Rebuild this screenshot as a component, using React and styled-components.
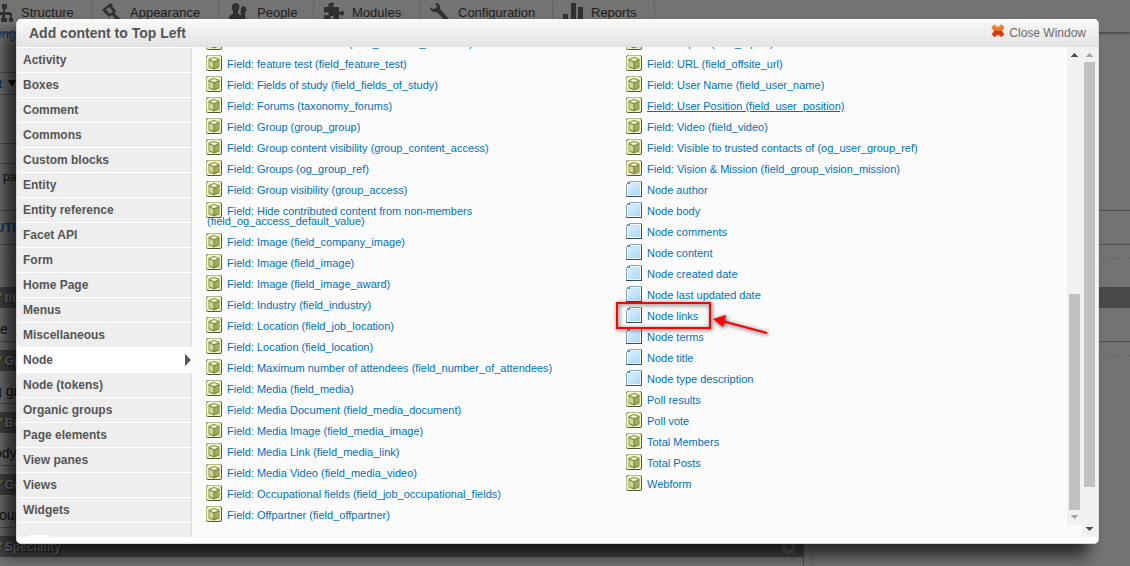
import React from "react";
import styled, { createGlobalStyle, css } from "styled-components";

const GlobalStyle = createGlobalStyle`
  body {
    margin: 0;
    overflow: hidden;
    background: #737373;
    font-family: "Liberation Sans", Arial, sans-serif;
  }
`;

// Page behind the modal
const Page = styled.div`
  position: relative;
  display: flex;
  flex-direction: column;
  height: 566px;
  overflow: hidden;
  background: #737373;
`;

const Toolbar = styled.nav`
  display: flex;
  flex: none;
  height: 32px;
  margin-left: -17px;
  box-shadow: 0 1px 3px #333;
  background: #737373;
`;

const ToolbarItem = styled.div`
  box-sizing: border-box;
  display: flex;
  gap: 8px;
  width: ${(props) => props.$width}px;
  padding: 2px 0 0 10px;
  border-right: 1px solid #626262;
  color: #1e1e1e;
  font-size: 13px;
  line-height: 22px;

  svg {
    flex: none;
    fill: #303030;
  }
`;

const Columns = styled.div`
  display: grid;
  grid-template-columns: 804px 1fr;
  flex: 1;
`;

const Main = styled.div`
  border-right: 1px solid #4c4c4c;
`;

const Aside = styled.div`
  margin-left: 7px;
  border-left: 1px dashed #656565;
`;

const Strip = styled.div`
  box-sizing: border-box;
  height: ${(props) => props.$height}px;
  border-bottom: 1px ${(props) => (props.$dashed ? "dashed" : "solid")}
    ${(props) => (props.$plain ? "transparent" : props.$dashed ? "#636363" : "#505050")};
  color: ${(props) => (props.$blue ? "#0c3f72" : "#111")};
  font-size: ${(props) => props.$size || 14}px;
  font-weight: ${(props) => (props.$bold ? "bold" : "normal")};
  line-height: ${(props) => props.$line || props.$height}px;
  text-indent: ${(props) => props.$indent || 0}px;
  white-space: pre;
`;

const Caret = styled.span`
  display: inline-block;
  margin-left: 6px;
  border: 4px solid transparent;
  border-top: 7px solid #111;
  border-bottom: 0;
  vertical-align: 1px;
`;

const PaneBar = styled.div`
  display: flex;
  justify-content: space-between;
  align-items: center;
  height: 21px;
  padding-right: 6px;
  background: #454545;
  color: #808080;
  font-size: 12px;
  font-weight: bold;
  text-shadow: 1px 1px 1px #222;

  i {
    margin-right: 3px;
    margin-left: -1px;
    color: #a87a2c;
  }
`;

const Band = styled.div`
  height: 21px;
  background: #484848;
`;

// Modal
const Modal = styled.section`
  position: absolute;
  top: 19px;
  left: 16px;
  box-sizing: border-box;
  display: flex;
  flex-direction: column;
  width: 1083px;
  height: 525px;
  overflow: hidden;
  border: 1px solid #d8d8d8;
  border-top-color: #fff;
  border-radius: 5px;
  background: #fff;
  box-shadow: -11px 12px 15px rgba(0, 0, 0, 0.65);
`;

const ModalHeader = styled.header`
  box-sizing: border-box;
  display: flex;
  justify-content: space-between;
  align-items: center;
  flex: none;
  height: 27px;
  padding: 0 12px 1px;
  background: linear-gradient(#f9f9f9, #e3e3e3);
`;

const Title = styled.h2`
  margin: 0;
  color: #555;
  font-size: 14px;
  font-weight: bold;
`;

const CloseLink = styled.a`
  display: flex;
  align-items: center;
  gap: 4px;
  color: #6b6b6b;
  font-size: 12px;

  svg {
    margin-bottom: 4px;
  }
`;

const ModalBody = styled.div`
  display: flex;
  height: 490px;
  padding-right: 1px;
  background: #fbfbfb;
`;

const Sidebar = styled.ul`
  box-sizing: border-box;
  flex: none;
  width: 175px;
  height: 490px;
  margin: 0;
  padding: 0;
  overflow: hidden;
  border-top: 1px solid #fff;
  background: #fff;
  list-style: none;
`;

const Category = styled.li`
  box-sizing: border-box;
  display: flex;
  justify-content: space-between;
  align-items: center;
  height: 25px;
  padding-left: 6px;
  border-bottom: 1px solid #fff;
  background: #eee;
  box-shadow: inset -1px 0 #dcdcdc;
  color: #555;
  font-size: 12px;
  font-weight: bold;

  ${(props) =>
    props.$active &&
    css`
      background: #fff;
      box-shadow: none;
    `}
`;

const CategoryEnd = styled.li`
  display: flex;
  align-items: flex-end;
  height: 14px;
  padding-left: 12px;
  background: #eee;
  box-shadow: inset -1px 0 #dcdcdc;

  span {
    width: 20px;
    height: 2px;
    background: #fff;
  }
`;

const Content = styled.div`
  display: flex;
  flex: 1;
  height: 490px;
  padding-left: 12px;
  overflow: hidden;
`;

const ContentColumn = styled.div`
  flex: none;
  width: 420px;
  margin-top: -14px;
`;

const ContentItem = styled.div`
  max-width: ${(props) => (props.$narrow ? "300px" : "none")};
  padding: 5px 0 6px 3px;
  color: #0071b8;
  font-size: 11px;
  line-height: 10px;

  svg {
    width: 20px;
    height: 20px;
    margin: -13px 0 -5px -3px;
    vertical-align: baseline;
  }

  a {
    margin-left: 3px;
    text-decoration: ${(props) => (props.$underlined ? "underline" : "none")};
    text-underline-offset: 1px;
  }
`;

const Scrollbar = styled.div`
  display: flex;
  flex-direction: column;
  align-items: center;
  flex: none;
  width: 15px;
  height: ${(props) => props.$height}px;
  background: #f1f1f1;
`;

const Thumb = styled.div`
  width: 11px;
  height: ${(props) => props.$height}px;
  margin: ${(props) => props.$top}px 0 auto;
  background: #c1c1c1;
`;

const ScrollArrow = styled.svg`
  flex: none;
  width: 15px;
  height: 15px;
  fill: ${(props) => (props.$enabled ? "#505050" : "#a3a3a3")};
`;

const Annotation = styled.svg`
  position: absolute;
  top: 295px;
  left: 608px;
  width: 170px;
  height: 50px;
  filter: drop-shadow(1px 1px 2px rgba(0, 0, 0, 0.75));
`;

const tools = [
  {
    label: "Structure",
    width: 109,
    icon: <path d="M9 2h5v5h-2v3h4q3 0 3 3v3h2v4h-5v-4h1v-2q0-1-1-1h-4v3h2v4H8v-4h1v-3H6q-1 0-1 1v2h1v4H1v-4h2v-3q0-3 3-3h4V7H9z" />,
  },
  {
    label: "Appearance",
    width: 127,
    icon: <path fillRule="evenodd" d="M0 8 8.500 1l2 1.500-.5 1.500 4 5-1.500 2L18 17l-2 2-6-6-3 2zm4-.5L8 12l3-2.500L7 5z" />,
  },
  {
    label: "People",
    width: 95,
    icon: (
      <path d="M7 1c3 0 4 3 3 6L9 9v3c3 1 4 2 3 5H0c0-3 1-4 4-5V9C1 4 4 1 7 1zm7 3c4 0 4 5 2 7v3l1 4h-4l-1-4v-3l-1-1c2-2 0-5 3-6z" />
    ),
  },
  {
    label: "Modules",
    width: 106,
    icon: (
      <path d="M0 5h5C2 1 10-1 10 2c0 1-1 2-1 3h6v5c2 0 4-2 5 0 1 4-2 4-5 2v6H9c0-2 2-4-1-4s-2 2-1 4H0v-5c2 0 5 1 5-1s-3-2-5-1z" />
    ),
  },
  {
    label: "Configuration",
    width: 133,
    icon: <path d="M5 1c4 0 6 3 5 6l9 10-3 3-9-10c-3 1-7-1-7-5l3 2 3-1 1-2z" />,
  },
  {
    label: "Reports",
    width: 102,
    icon: <path d="M0 12h5v8H0zM8 1h5v19H8zM15 5h5v15h-5z" />,
  },
];

const categories = [
  "Activity",
  "Boxes",
  "Comment",
  "Commons",
  "Custom blocks",
  "Entity",
  "Entity reference",
  "Facet API",
  "Form",
  "Home Page",
  "Menus",
  "Miscellaneous",
  "Node",
  "Node (tokens)",
  "Organic groups",
  "Page elements",
  "View panes",
  "Views",
  "Widgets",
];

const leftItems = [
  "Field: Exercise locations (field_exercise_locations)",
  "Field: feature test (field_feature_test)",
  "Field: Fields of study (field_fields_of_study)",
  "Field: Forums (taxonomy_forums)",
  "Field: Group (group_group)",
  "Field: Group content visibility (group_content_access)",
  "Field: Groups (og_group_ref)",
  "Field: Group visibility (group_access)",
  "Field: Hide contributed content from non-members (field_og_access_default_value)",
  "Field: Image (field_company_image)",
  "Field: Image (field_image)",
  "Field: Image (field_image_award)",
  "Field: Industry (field_industry)",
  "Field: Location (field_job_location)",
  "Field: Location (field_location)",
  "Field: Maximum number of attendees (field_number_of_attendees)",
  "Field: Media (field_media)",
  "Field: Media Document (field_media_document)",
  "Field: Media Image (field_media_image)",
  "Field: Media Link (field_media_link)",
  "Field: Media Video (field_media_video)",
  "Field: Occupational fields (field_job_occupational_fields)",
  "Field: Offpartner (field_offpartner)",
];

const rightItems = [
  "Field: Topics (field_topics)",
  "Field: URL (field_offsite_url)",
  "Field: User Name (field_user_name)",
  "Field: User Position (field_user_position)",
  "Field: Video (field_video)",
  "Field: Visible to trusted contacts of (og_user_group_ref)",
  "Field: Vision & Mission (field_group_vision_mission)",
  "Node author",
  "Node body",
  "Node comments",
  "Node content",
  "Node created date",
  "Node last updated date",
  "Node links",
  "Node terms",
  "Node title",
  "Node type description",
  "Poll results",
  "Poll vote",
  "Total Members",
  "Total Posts",
  "Webform",
];

const CubeIcon = () => (
  <svg viewBox="0 0 20 20">
    <path fill="#fff" d="M0 0h20v20H0z" />
    <rect x="2" y="2" width="16" height="16" rx="2.500" fill="#54553c" />
    <path fill="#b8bd83" d="M4.500 2h11l1.500 1v1H4v13H3l-1-1.500v-11z" />
    <rect x="3" y="3" width="14" height="14" rx="1.500" fill="#f4f6c9" />
    <path fill="#dfe4a5" d="M4 14h12v2H4z" />
    <path fill="#7d8540" d="m10 4 5.500 2v8L10 16.500 4.500 14V6z" />
    <path fill="#f5f8d5" d="m10 5 4 1.500L10 8.200 6 6.500z" />
    <path fill="#d0d796" d="m5.200 7.500 4.200 1.800v5.700l-4.200-1.800z" />
    <path fill="#a3ae5d" d="m14.800 7.500-4.200 1.800v5.700l4.200-1.800z" />
  </svg>
);

const NodeIcon = () => (
  <svg viewBox="0 0 20 20">
    <defs>
      <linearGradient id="nodeFill" x1="0" y1="0" x2="1" y2="1">
        <stop offset="0" stopColor="#d9eefe" />
        <stop offset="1" stopColor="#a9d8f8" />
      </linearGradient>
    </defs>
    <path fill="#fff" d="M0 0h20v20H0z" />
    <path fill="#384e69" d="M5 2h12l1 1v15H2V5h1V3h2z" />
    <path fill="#82a1bd" d="M5 2h12v1H5v2H3v12H2V5h1V3h2z" />
    <path fill="#f2faff" d="M5 3h12v14H3V5h2z" />
    <path fill="url(#nodeFill)" d="M4 6h12v10H4z" />
    <path fill="#c7e6fc" d="M6 4h10v2H6z" />
    <path fill="#6b8bab" d="M5 3h1v2H3V4h2z" />
  </svg>
);

const GearIcon = () => (
  <svg width="16" height="16" viewBox="0 0 16 16">
    <circle cx="8" cy="8" r="4.500" fill="none" stroke="#626262" strokeWidth="3" />
    <circle cx="8" cy="8" r="6.500" fill="none" stroke="#626262" strokeWidth="2" strokeDasharray="2.600 2.500" />
  </svg>
);

const Arrow = ({ down, enabled }) => (
  <ScrollArrow $enabled={enabled} viewBox="0 0 15 15" shapeRendering="crispEdges">
    <path d={down ? "M4 5h7v1h-1v1H9v1H8v1H7V8H6V7H5V6H4z" : "M7 6h1v1h1v1h1v1h1v1H4V9h1V8h1V7h1z"} />
  </ScrollArrow>
);

const Backdrop = () => (
  <>
    <Toolbar>
      {tools.map((tool) => (
        <ToolbarItem key={tool.label} $width={tool.width}>
          <svg width="20" height="20" viewBox="0 0 20 20">
            {tool.icon}
          </svg>
          {tool.label}
        </ToolbarItem>
      ))}
    </Toolbar>
    <Columns>
      <Main>
        <Strip $height={41} $line={4} $size={13} $indent={-5} $blue>
          ting
        </Strip>
        <Strip $height={22} $blue $bold $size={13} $indent={-2}>
          t<Caret />
        </Strip>
        <Strip $height={49} />
        <Strip $height={20} />
        <Strip $height={47} $line={26} $size={12} $indent={3}>
          pa
        </Strip>
        <Strip $height={34} $blue $bold $size={13} $indent={-5}>
          UTI
        </Strip>
        <Strip $height={14} $dashed />
        <Strip $height={28} $plain />
        <PaneBar>
          <span>
            <i>'</i>tit
          </span>
        </PaneBar>
        <Strip $height={34} $line={42}>
          e
        </Strip>
        <Strip $height={8} $plain />
        <PaneBar>
          <span>
            <i>'</i>Gr
          </span>
        </PaneBar>
        <Strip $height={33} $line={40} $indent={-6}>
          g gr
        </Strip>
        <Strip $height={8} $plain />
        <PaneBar>
          <span>
            <i>'</i>Bo
          </span>
        </PaneBar>
        <Strip $height={33} $line={41} $indent={-6}>
          ody
        </Strip>
        <Strip $height={8} $plain />
        <PaneBar>
          <span>
            <i>'</i>Gr
          </span>
        </PaneBar>
        <Strip $height={33} $line={41} $indent={-1}>
          oup
        </Strip>
        <Strip $height={8} $plain />
        <PaneBar>
          <span>
            <i>'</i>Speciality
          </span>
          <GearIcon />
        </PaneBar>
      </Main>
      <Aside>
        <Strip $height={179} />
        <Strip $height={34} />
        <Strip $height={14} $dashed />
        <Strip $height={28} $plain />
        <Band />
        <Strip $height={34} />
        <Strip $height={14} $dashed />
      </Aside>
    </Columns>
  </>
);

const renderItem = (label) => (
  <ContentItem
    key={label}
    $narrow={label.includes("non-members")}
    $underlined={label.includes("User Position")}
  >
    {label.startsWith("Node") ? <NodeIcon /> : <CubeIcon />}
    <a>{label}</a>
  </ContentItem>
);

const App = () => {
  return (
    <Page>
      <GlobalStyle />
      <Backdrop />
      <Modal>
        <ModalHeader>
          <Title>Add content to Top Left</Title>
          <CloseLink>
            <svg width="14" height="14" viewBox="0 0 14 14">
              <defs>
                <linearGradient id="closeFill" x1="0" y1="0" x2="0" y2="1">
                  <stop offset="0" stopColor="#f29a32" />
                  <stop offset=".5" stopColor="#e5702b" />
                  <stop offset=".55" stopColor="#cf3510" />
                  <stop offset="1" stopColor="#d8421b" />
                </linearGradient>
              </defs>
              <path
                fill="url(#closeFill)"
                stroke="#d4551e"
                strokeWidth=".6"
                d="m3.500.8 3.500 2.700 3.500-2.700 2.700 2.700L10.700 7l2.500 3.300-2.700 2.700L7 10.500 3.500 13 .8 10.300 3.300 7 .8 3.500z"
              />
            </svg>
            Close Window
          </CloseLink>
        </ModalHeader>
        <ModalBody>
          <Sidebar>
            {categories.map((name) => (
              <Category key={name} $active={name === "Node"}>
                {name}
                {name === "Node" && (
                  <svg width="7" height="14" viewBox="0 0 7 14">
                    <path fill="#555" d="M0 1l6 6-6 6z" />
                  </svg>
                )}
              </Category>
            ))}
            <CategoryEnd>
              <span />
            </CategoryEnd>
          </Sidebar>
          <Content>
            <ContentColumn>{leftItems.map(renderItem)}</ContentColumn>
            <ContentColumn>{rightItems.map(renderItem)}</ContentColumn>
          </Content>
          <Scrollbar $height={478}>
            <Arrow enabled />
            <Thumb $top={232} $height={216} />
            <Arrow down />
          </Scrollbar>
          <Scrollbar $height={490}>
            <Arrow />
            <Thumb $top={0} $height={425} />
            <Arrow down enabled />
          </Scrollbar>
        </ModalBody>
      </Modal>
      <Annotation viewBox="0 0 170 50">
        <rect x="9" y="8" width="93" height="25" fill="none" stroke="#f00" strokeWidth="2" />
        <path stroke="#f00" strokeWidth="2" d="M114 26 159 38" />
        <path fill="#f00" d="m105 24 13-4-3 12z" />
      </Annotation>
    </Page>
  );
};

export default App;
